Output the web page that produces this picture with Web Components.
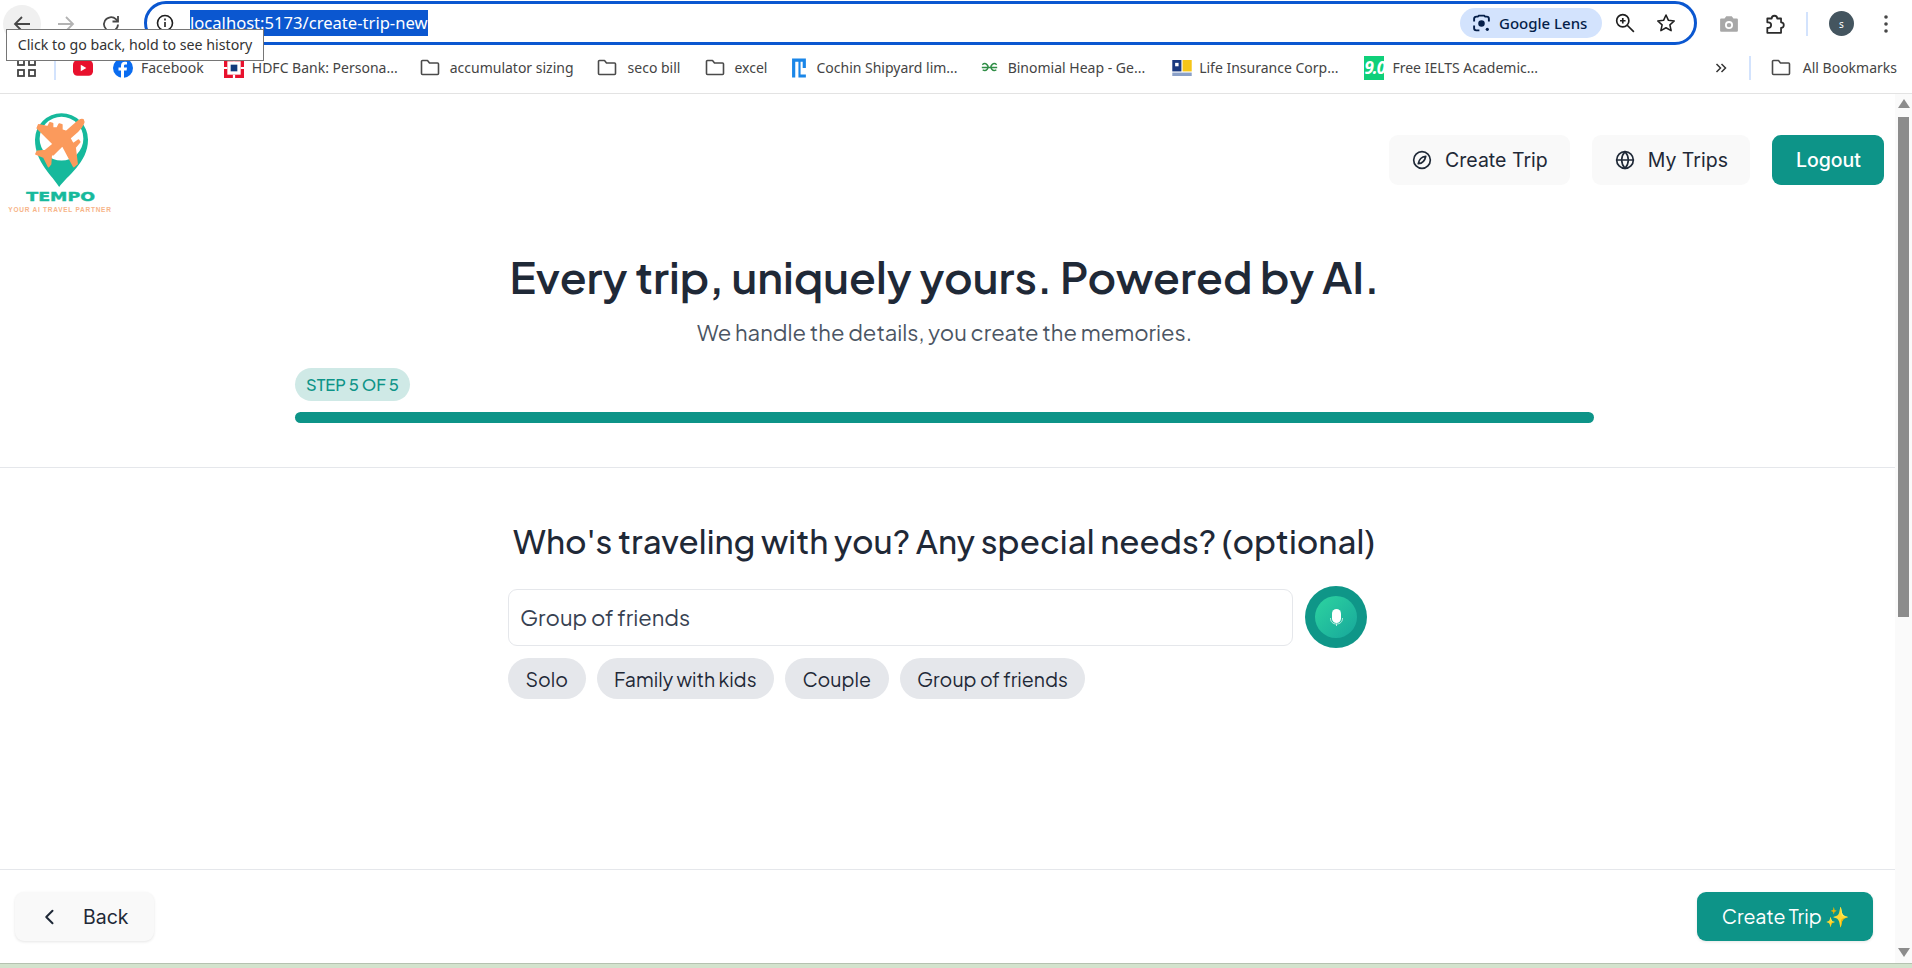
<!DOCTYPE html>
<html>
<head>
<meta charset="utf-8">
<title>Tempo</title>
<style>
    html, body { margin: 0; height: 968px; overflow: hidden; background: #fff; }
    body { display: flex; flex-direction: column; font-family: "Noto Sans", sans-serif; }
    .page-row { display: flex; height: 869px; }
    .strip { height: 5px; background: #d3e3cd; border-top: 1px solid #b5c2b0; box-sizing: border-box; }
</style>
</head>
<body>
<browser-toolbar></browser-toolbar>
<bookmark-bar></bookmark-bar>
<div class="page-row">
    <trip-page></trip-page>
    <page-scrollbar></page-scrollbar>
</div>
<div class="strip"></div>

<script>
const ICONS = {
    compass: '<svg width="20" height="20" viewBox="0 0 24 24" fill="none" stroke="currentColor" stroke-width="2" stroke-linecap="round" stroke-linejoin="round"><circle cx="12" cy="12" r="10"/><path d="M16.5 7.500c-4.500.5-8 3.500-9 9 4.500-.5 8-3.500 9-9z"/></svg>',
    globe: '<svg width="20" height="20" viewBox="0 0 24 24" fill="none" stroke="currentColor" stroke-width="2" stroke-linecap="round" stroke-linejoin="round"><circle cx="12" cy="12" r="10"/><path d="M2 12h20"/><path d="M12 2a15 15 0 0 1 4 10 15 15 0 0 1-4 10 15 15 0 0 1-4-10 15 15 0 0 1 4-10z"/></svg>',
    chevron: '<svg width="20" height="20" viewBox="0 0 24 24" fill="none" stroke="currentColor" stroke-width="2.400" stroke-linecap="round" stroke-linejoin="round"><path d="M15 4.500L7.500 12l7.500 7.500"/></svg>',
    folder: '<svg width="20" height="17" viewBox="0 0 20 17" fill="none" stroke="#4a4a4a" stroke-width="1.600" stroke-linejoin="round"><path d="M1.500 2.500a1 1 0 0 1 1-1h5l2 2.500h8a1 1 0 0 1 1 1v9.500a1 1 0 0 1-1 1h-15a1 1 0 0 1-1-1z"/></svg>'
};

class BrowserToolbar extends HTMLElement {
    connectedCallback() {
        this.attachShadow({ mode: 'open' });
        this.shadowRoot.innerHTML = `
            <style>
                :host {
                    display: flex;
                    align-items: center;
                    height: 47px;
                    position: relative;
                    font-family: "Noto Sans", sans-serif;
                    color: #3c4043;
                }
                .nav { display: flex; align-items: center; width: 144px; flex: none; }
                .nav span { width: 44px; height: 44px; display: flex; align-items: center; justify-content: center; }
                .nav span:first-child { background: #f0f0f0; border-radius: 50%; width: 38px; height: 38px; margin: 0 7px 0 3px; }
                .omni {
                    flex: none;
                    width: 1553px;
                    height: 44px;
                    margin-top: -1px;
                    box-sizing: border-box;
                    border: 3px solid #0b57d0;
                    border-radius: 22px;
                    display: flex;
                    align-items: center;
                    padding: 0 18px 0 9px;
                    background: #fff;
                }
                .url {
                    background: #0b57d0;
                    color: #fff;
                    font-size: 16.600px;
                    line-height: 26px;
                    margin-left: 16px;
                    white-space: nowrap;
                }
                .lens {
                    margin-left: auto;
                    background: #d3e3fd;
                    color: #041e49;
                    height: 30px;
                    width: 142px;
                    box-sizing: border-box;
                    border-radius: 15px;
                    display: flex;
                    align-items: center;
                    gap: 8px;
                    padding: 0 10px 0 12px;
                    font-size: 15px;
                    font-weight: 500;
                    white-space: nowrap;
                }
                .zoom { display: flex; margin-left: 13px; }
                .star { display: flex; margin-left: 21px; }
                .right { display: flex; align-items: center; margin-left: 22px; flex: 1; }
                .sep { width: 2px; height: 24px; background: #d3e3fd; margin: 0 21px 0 20px; }
                .avatar {
                    width: 25px; height: 25px; border-radius: 50%;
                    background: #44555f; color: #fff; font-size: 10px;
                    display: flex; align-items: center; justify-content: center;
                }
                .tip {
                    position: absolute;
                    left: 6px; top: 29px;
                    height: 32px;
                    width: 258px;
                    box-sizing: border-box;
                    background: #fff;
                    border: 1px solid #767676;
                    color: #333;
                    font-size: 14.200px;
                    line-height: 30px;
                    text-align: center;
                    white-space: nowrap;
                    z-index: 5;
                }
            </style>
            <div class="nav">
                <span><svg width="20" height="20" viewBox="0 0 20 20" fill="none" stroke="#474747" stroke-width="1.800"><path d="M18 10H3M10 3l-7 7 7 7"/></svg></span>
                <span style="width:36px"><svg width="20" height="20" viewBox="0 0 20 20" fill="none" stroke="#b3b3b3" stroke-width="1.800"><path d="M2 10h15M10 3l7 7-7 7"/></svg></span>
                <span style="width:36px;margin-left:9px"><svg width="20" height="20" viewBox="0 0 20 20" fill="none" stroke="#474747" stroke-width="1.800"><path d="M17 10.500a7 7 0 1 1-2.100-5.300L17 7.500"/><path d="M17 2v5.500h-5.500"/></svg></span>
            </div>
            <div class="omni">
                <svg width="18" height="18" viewBox="0 0 18 18" fill="none" stroke="#1f1f1f" stroke-width="1.600"><circle cx="9" cy="9" r="7.500"/><path d="M9 8v5M9 4.500v2"/></svg>
                <span class="url">localhost:5173/create-trip-new</span>
                <div class="lens">
                    <svg width="19" height="19" viewBox="0 0 18 18" fill="none" stroke="#041e49" stroke-width="1.800"><path d="M2 7V4.500a2 2 0 0 1 2-2h1.500l1-1h5l1 1H14a2 2 0 0 1 2 2V7M2 11v2.500a2 2 0 0 0 2 2h3"/><circle cx="9" cy="9" r="2.200" fill="#041e49"/><circle cx="14.500" cy="14.500" r="1.500" fill="#041e49" stroke="none"/></svg>
                    <span>Google Lens</span>
                </div>
                <span class="zoom"><svg width="20" height="20" viewBox="0 0 18 18" fill="none" stroke="#1f1f1f" stroke-width="1.500"><circle cx="7" cy="7" r="5.500"/><path d="M11 11l6 6M4.500 7h5M7 4.500v5"/></svg></span>
                <span class="star"><svg width="20" height="20" viewBox="0 0 18 18" fill="none" stroke="#1f1f1f" stroke-width="1.400" stroke-linejoin="round"><path d="M9 1.800l2.200 4.800 5.200.6-3.900 3.500 1.100 5.200L9 13.300l-4.600 2.600 1.100-5.200L1.600 7.200l5.200-.6z"/></svg></span>
            </div>
            <div class="right">
                <svg width="20" height="18" viewBox="0 0 18 16"><path d="M1 4a1 1 0 0 1 1-1h3l1.500-2h5L13 3h3a1 1 0 0 1 1 1v10a1 1 0 0 1-1 1H2a1 1 0 0 1-1-1z" fill="#a8a8a8"/><circle cx="9" cy="9" r="3.600" fill="#fff"/><circle cx="9" cy="9" r="2" fill="#a8a8a8"/></svg>
                <svg width="22" height="22" viewBox="0 0 20 20" fill="none" stroke="#2b2b2b" stroke-width="1.600" stroke-linejoin="round" style="margin-left:25px"><path d="M3 5h4a2.500 2.500 0 0 1 5 0h3.500v3.500a2.500 2.500 0 0 1 0 5V18H3v-4.500h1a2.500 2.500 0 0 0 0-5H3z"/></svg>
                <span class="sep"></span>
                <span class="avatar">s</span>
                <svg width="4" height="18" viewBox="0 0 4 18" fill="#474747" style="margin-left:30px"><circle cx="2" cy="2" r="1.800"/><circle cx="2" cy="9" r="1.800"/><circle cx="2" cy="16" r="1.800"/></svg>
            </div>
            <div class="tip">Click to go back, hold to see history</div>
        `;
    }
}

class BookmarkItem extends HTMLElement {
    connectedCallback() {
        this.attachShadow({ mode: 'open' });
        this.shadowRoot.innerHTML = `
            <style>
                :host {
                    display: flex;
                    align-items: center;
                    gap: var(--gap, 8px);
                    font-size: 14px;
                    color: #444;
                    white-space: nowrap;
                }
            </style>
            <slot name="icon"></slot>
            <slot></slot>
        `;
    }
}

class BookmarkBar extends HTMLElement {
    connectedCallback() {
        this.attachShadow({ mode: 'open' });
        const f = ICONS.folder.replace('<svg', '<svg slot="icon"');
        this.shadowRoot.innerHTML = `
            <style>
                :host {
                    display: flex;
                    align-items: center;
                    height: 47px;
                    box-sizing: border-box;
                    border-bottom: 1px solid #e3e3e3;
                    font-family: "Noto Sans", sans-serif;
                    padding: 0 15px 5px 17px;
                }
                .sep { width: 2px; height: 24px; background: #d3e3fd; }
                bookmark-item svg { display: block; }
                .nine {
                    width: 20px; height: 24px; background: #0fd07a; color: #fff;
                    font-size: 17px; font-weight: 700; font-style: italic; line-height: 24px;
                    text-align: center; letter-spacing: -1px;
                }
            </style>
            <svg width="19" height="19" viewBox="0 0 19 19" fill="none" stroke="#444" stroke-width="1.800"><rect x="1" y="1" width="6" height="6"/><rect x="12" y="1" width="6" height="6"/><rect x="1" y="12" width="6" height="6"/><rect x="12" y="12" width="6" height="6"/></svg>
            <span class="sep" style="margin-left:18px"></span>
            <bookmark-item style="margin-left:17px"><svg slot="icon" width="20" height="16" viewBox="0 0 18 14"><rect width="18" height="14" rx="4" fill="#e8112d"/><path d="M7 4l5 3-5 3z" fill="#fff"/></svg></bookmark-item>
            <bookmark-item style="margin-left:20px"><svg slot="icon" width="20" height="20" viewBox="0 0 20 20"><circle cx="10" cy="10" r="10" fill="#0a6cf0"/><path d="M11 20v-7.500h2.600l.4-3H11V8c0-1 .4-1.500 1.600-1.500H14V4c-.6-.1-1.400-.2-2.200-.2-2.400 0-3.800 1.400-3.800 3.900v1.800H5.500v3H8V20z" fill="#fff"/></svg>Facebook</bookmark-item>
            <bookmark-item style="margin-left:20px;--gap:8px"><svg slot="icon" width="20" height="20" viewBox="0 0 18 18"><rect width="18" height="18" fill="#e8112d"/><rect x="3" y="3" width="12" height="12" fill="#fff"/><rect x="6" y="6" width="6" height="6" fill="#123a7c"/><path d="M8 0h2v3H8zM8 15h2v3H8zM0 8h3v2H0zM15 8h3v2h-3z" fill="#fff"/></svg>HDFC Bank: Persona...</bookmark-item>
            <bookmark-item style="margin-left:22px;--gap:10px">${f}accumulator sizing</bookmark-item>
            <bookmark-item style="margin-left:23px;--gap:11px">${f}seco bill</bookmark-item>
            <bookmark-item style="margin-left:25px;--gap:9px">${f}excel</bookmark-item>
            <bookmark-item style="margin-left:24px;--gap:8px"><svg slot="icon" width="17" height="22" viewBox="0 0 16 20"><path d="M1 1h13v9h-3V4H9v12h5v3H7V4H4v15H1z" fill="#1a86e8"/></svg>Cochin Shipyard lim...</bookmark-item>
            <bookmark-item style="margin-left:22px;--gap:9px"><svg slot="icon" width="19" height="11" viewBox="0 0 16 10" fill="none" stroke="#2f8d46" stroke-width="1.300"><path d="M1 5h14M1.500 2.500A3 3 0 1 1 1.800 7M14.500 2.500A3 3 0 1 0 14.200 7"/></svg>Binomial Heap - Ge...</bookmark-item>
            <bookmark-item style="margin-left:27px;--gap:7px"><svg slot="icon" width="20" height="16" viewBox="0 0 17 14"><rect width="8" height="10" fill="#1b3a80"/><rect x="2.500" y="2.500" width="3" height="3" fill="#fff"/><rect x="9" width="8" height="10" fill="#f5c518"/><rect y="11" width="17" height="3" fill="#8aa0c8"/></svg>Life Insurance Corp...</bookmark-item>
            <bookmark-item style="margin-left:26px;--gap:8px"><span slot="icon" class="nine">9.0</span>Free IELTS Academic...</bookmark-item>
            <svg width="12" height="10" viewBox="0 0 12 10" fill="none" stroke="#333" stroke-width="1.500" style="margin-left:auto"><path d="M1.500 1l4 4-4 4M6.500 1l4 4-4 4"/></svg>
            <span class="sep" style="margin-left:22px"></span>
            <bookmark-item style="margin-left:20px;--gap:12px">${f}All Bookmarks</bookmark-item>
        `;
    }
}

class TempoLogo extends HTMLElement {
    connectedCallback() {
        this.attachShadow({ mode: 'open' });
        this.shadowRoot.innerHTML = `
            <style>
                :host {
                    display: flex;
                    flex-direction: column;
                    align-items: center;
                    width: 102px;
                    margin-top: -3px;
                }
                svg { display: block; margin-left: 3px; }
                .name {
                    font: 700 12px/12px "DejaVu Sans", sans-serif;
                    color: #16b99c;
                    -webkit-text-stroke: 0.4px #16b99c;
                    transform: scaleX(1.45);
                    margin: 3px 0 0 2px;
                }
                .tag {
                    font: 700 6.500px/8px "Liberation Sans", sans-serif;
                    letter-spacing: 0.75px;
                    color: #f7b488;
                    white-space: nowrap;
                    margin-top: 3px;
                }
            </style>
            <svg width="55" height="76" viewBox="42 22 166 228">
                <path d="M118 248C100 215 45 175 45 105A80 80 0 0 1 205 105C205 175 140 215 118 248Z" fill="#16b99c"/>
                <circle cx="125" cy="102" r="66" fill="#fff"/>
                <path d="M190 45C195 52 188 65 175 78L150 100L160 118L176 106L180 112L166 128L172 178L162 186L128 122L100 150L94 150L92 178L86 186L72 158L48 148L52 140L76 138L100 118L52 70L56 60L84 66L90 54L98 56L98 70L112 70L118 58L126 60L126 76L140 80L165 58C175 48 184 42 190 45Z" fill="#fb9a5c" stroke="#fb9a5c" stroke-width="5" stroke-linejoin="round"/>
            </svg>
            <div class="name">TEMPO</div>
            <div class="tag">YOUR AI TRAVEL PARTNER</div>
        `;
    }
}

class NavButton extends HTMLElement {
    connectedCallback() {
        this.attachShadow({ mode: 'open' });
        const primary = this.hasAttribute('primary');
        this.shadowRoot.innerHTML = `
            <style>
                :host {
                    display: inline-flex;
                    align-items: center;
                    justify-content: center;
                    gap: 13px;
                    height: 50px;
                    box-sizing: border-box;
                    padding: ${primary ? '0 23px 0 24px' : '0 22px 0 23px'};
                    border-radius: 9px;
                    background: ${primary ? '#0d9488' : '#f9f9f9'};
                    color: ${primary ? '#fff' : '#1f2937'};
                    font: ${primary ? 500 : 400} 19.500px "Inter", sans-serif;
                    white-space: nowrap;
                }
            </style>
            <slot name="icon"></slot>
            <slot></slot>
        `;
    }
}

class StepProgress extends HTMLElement {
    connectedCallback() {
        this.attachShadow({ mode: 'open' });
        this.shadowRoot.innerHTML = `
            <style>
                :host {
                    display: block;
                    width: 1299px;
                }
                .badge {
                    display: inline-block;
                    height: 33px;
                    line-height: 33px;
                    padding: 0 11px;
                    border-radius: 17px;
                    background: #cfe9e6;
                    color: #0d9488;
                    font-size: 16.500px;
                    font-weight: 500;
                    vertical-align: top;
                }
                .track { height: 11px; margin-top: 11px; border-radius: 6px; background: #0d9488; }
            </style>
            <div class="badge"><slot name="label"></slot></div>
            <div class="track"></div>
        `;
    }
}

class TripHeader extends HTMLElement {
    connectedCallback() {
        this.attachShadow({ mode: 'open' });
        this.shadowRoot.innerHTML = `
            <style>
                :host {
                    display: block;
                    height: 374px;
                    box-sizing: border-box;
                    border-bottom: 1px solid #e5e7eb;
                    padding: 21px 11px 0 9px;
                }
                .top { display: flex; align-items: flex-start; justify-content: space-between; }
                .links { display: flex; gap: 22px; margin-top: 20px; }
                .hero { text-align: center; margin: 34px 4px 0 0; }
                h1 {
                    margin: 0;
                    font-size: 44px;
                    line-height: 56px;
                    font-weight: 600;
                    color: #1f2937;
                }
                p {
                    margin: 13px 0 0;
                    font-size: 22px;
                    line-height: 30px;
                    color: #4b5563;
                }
                step-progress { margin: 21px 0 0 286px; }
            </style>
            <div class="top">
                <tempo-logo></tempo-logo>
                <div class="links">
                    <nav-button><span slot="icon" style="display:flex">${ICONS.compass}</span>Create Trip</nav-button>
                    <nav-button><span slot="icon" style="display:flex">${ICONS.globe}</span>My Trips</nav-button>
                    <nav-button primary>Logout</nav-button>
                </div>
            </div>
            <div class="hero">
                <h1>Every trip, uniquely yours. Powered by AI.</h1>
                <p>We handle the details, you create the memories.</p>
            </div>
            <step-progress><span slot="label">STEP 5 OF 5</span></step-progress>
        `;
    }
}

class ChipButton extends HTMLElement {
    connectedCallback() {
        this.attachShadow({ mode: 'open' });
        this.shadowRoot.innerHTML = `
            <style>
                :host {
                    display: inline-flex;
                    align-items: center;
                    height: 41px;
                    padding: 0 17.500px;
                    border-radius: 21px;
                    background: #e5e7eb;
                    color: #1f2937;
                    font-size: 19.500px;
                    white-space: nowrap;
                }
            </style>
            <slot></slot>
        `;
    }
}

class MicButton extends HTMLElement {
    connectedCallback() {
        this.attachShadow({ mode: 'open' });
        this.shadowRoot.innerHTML = `
            <style>
                :host {
                    display: flex;
                    align-items: center;
                    justify-content: center;
                    flex: none;
                    width: 62px;
                    height: 62px;
                    border-radius: 50%;
                    background: #0f9688;
                }
                div {
                    width: 42px;
                    height: 42px;
                    border-radius: 50%;
                    background: linear-gradient(135deg, #2dd4a0, #17a79b);
                    display: flex;
                    align-items: center;
                    justify-content: center;
                }
            </style>
            <div>
                <svg width="13" height="17" viewBox="0 0 13 17" fill="none"><rect x="2" y="0" width="9" height="14" rx="4.500" fill="#fff"/><path d="M.5 9.500c0 3.500 2.500 5.500 6 5.500s6-2 6-5.500M6.500 15v2" stroke="#e6f7f3" stroke-width="0.800" stroke-linecap="round"/></svg>
            </div>
        `;
    }
}

class TripQuestion extends HTMLElement {
    connectedCallback() {
        this.attachShadow({ mode: 'open' });
        this.shadowRoot.innerHTML = `
            <style>
                :host {
                    display: block;
                    flex: 1;
                    width: 864px;
                    margin-left: 512px;
                    padding-top: 51px;
                }
                h2 {
                    margin: 0;
                    text-align: center;
                    font-size: 33px;
                    line-height: 44px;
                    font-weight: 500;
                    color: #1f2937;
                    white-space: nowrap;
                }
                .row { display: flex; align-items: center; gap: 12px; margin: 23px 0 0 -4px; }
                .input {
                    flex: none;
                    width: 785px;
                    height: 57px;
                    box-sizing: border-box;
                    border: 1px solid #e5e7eb;
                    border-radius: 9px;
                    padding: 0 11px;
                    display: flex;
                    align-items: center;
                    font-size: 22px;
                    color: #374151;
                }
                .chips { display: flex; gap: 11px; margin: 10px 0 0 -4px; }
            </style>
            <h2><slot name="question"></slot></h2>
            <div class="row">
                <div class="input"><slot name="value"></slot></div>
                <mic-button></mic-button>
            </div>
            <div class="chips"><slot></slot></div>
        `;
    }
}

class FooterButton extends HTMLElement {
    connectedCallback() {
        this.attachShadow({ mode: 'open' });
        const primary = this.hasAttribute('primary');
        this.shadowRoot.innerHTML = `
            <style>
                :host {
                    display: inline-flex;
                    align-items: center;
                    height: 49px;
                    box-sizing: border-box;
                    border-radius: 9px;
                    white-space: nowrap;
                    font-size: 19.500px;
                    box-shadow: 0 1px 3px rgba(0,0,0,0.1);
                    background: ${primary ? '#0d9488' : '#f9f9f9'};
                    color: ${primary ? '#fff' : '#1f2937'};
                    gap: ${primary ? '0' : '23px'};
                    padding: ${primary ? '0 24px 0 25px' : '0 25px'};
                    ${primary ? '' : 'font-family: "Inter", sans-serif;'}
                }
            </style>
            <slot name="icon"></slot>
            <slot></slot>
        `;
    }
}

class TripFooter extends HTMLElement {
    connectedCallback() {
        this.attachShadow({ mode: 'open' });
        this.shadowRoot.innerHTML = `
            <style>
                :host {
                    display: flex;
                    align-items: flex-start;
                    justify-content: space-between;
                    height: 94px;
                    box-sizing: border-box;
                    border-top: 1px solid #e5e7eb;
                    padding: 22px 22px 0 15px;
                }
            </style>
            <slot></slot>
        `;
    }
}

class TripPage extends HTMLElement {
    connectedCallback() {
        this.attachShadow({ mode: 'open' });
        this.shadowRoot.innerHTML = `
            <style>
                :host {
                    display: flex;
                    flex-direction: column;
                    flex: 1;
                    min-width: 0;
                    font-family: "Plus Jakarta Sans", "Inter", sans-serif;
                }
            </style>
            <trip-header></trip-header>
            <trip-question>
                <span slot="question">Who's traveling with you? Any special needs? (optional)</span>
                <span slot="value">Group of friends</span>
                <chip-button>Solo</chip-button>
                <chip-button>Family with kids</chip-button>
                <chip-button>Couple</chip-button>
                <chip-button>Group of friends</chip-button>
            </trip-question>
            <trip-footer>
                <footer-button><span slot="icon" style="display:flex">${ICONS.chevron}</span>Back</footer-button>
                <footer-button primary>Create Trip ✨</footer-button>
            </trip-footer>
        `;
    }
}

class PageScrollbar extends HTMLElement {
    connectedCallback() {
        this.attachShadow({ mode: 'open' });
        this.shadowRoot.innerHTML = `
            <style>
                :host {
                    display: flex;
                    flex-direction: column;
                    align-items: center;
                    width: 17px;
                    flex: none;
                    background: #fafafa;
                    box-sizing: border-box;
                    padding-top: 5px;
                }
                .thumb { width: 11px; height: 500px; margin-top: 9px; background: #8c8c8c; }
                .down { margin-top: auto; margin-bottom: 6px; }
                svg { display: block; }
            </style>
            <svg width="12" height="9" viewBox="0 0 12 9"><path d="M0 9L6 0l6 9z" fill="#8c8c8c"/></svg>
            <div class="thumb"></div>
            <svg class="down" width="12" height="9" viewBox="0 0 12 9"><path d="M0 0l6 9 6-9z" fill="#8c8c8c"/></svg>
        `;
    }
}

customElements.define('browser-toolbar', BrowserToolbar);
customElements.define('bookmark-item', BookmarkItem);
customElements.define('bookmark-bar', BookmarkBar);
customElements.define('tempo-logo', TempoLogo);
customElements.define('nav-button', NavButton);
customElements.define('step-progress', StepProgress);
customElements.define('trip-header', TripHeader);
customElements.define('chip-button', ChipButton);
customElements.define('mic-button', MicButton);
customElements.define('trip-question', TripQuestion);
customElements.define('footer-button', FooterButton);
customElements.define('trip-footer', TripFooter);
customElements.define('trip-page', TripPage);
customElements.define('page-scrollbar', PageScrollbar);
</script>
</body>
</html>
